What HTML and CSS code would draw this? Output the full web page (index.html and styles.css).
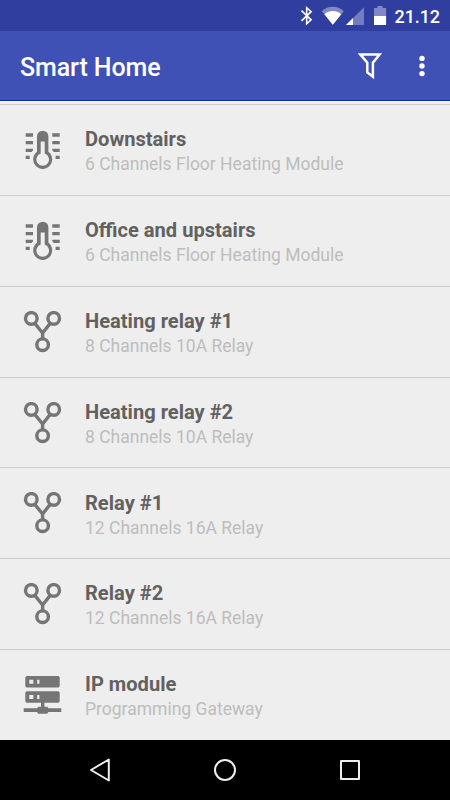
FILE: index.html
```
<!DOCTYPE html>
<html lang="en">
<head>
    <meta charset="UTF-8">
    <meta name="viewport" content="width=device-width, initial-scale=1.0">
    <title>Smart Home</title>
    <link rel="stylesheet" href="styles.css">
</head>
<body>

<!-- Shared icons -->
<svg class="symbols">
    <symbol id="heating" viewBox="0 0 42 42">
        <path fill="currentColor" d="M3.7 4.2H11v3.6H3.7zM3.7 12H11v3.2H3.7zM3.7 19.7H11v1.6L9.6 23H3.7zM3.7 26.8h4V30h-4zM30.3 4.2h7.4v3.6h-7.4zM30.3 12h7.4v3.2h-7.4zM30.3 19.7h7.4V23h-5.9l-1.5-1.7zM33.6 26.8h4.1V30h-4.1z"/>
        <path fill="currentColor" fill-rule="evenodd" d="M15 7.4a5.7 5.7 0 0 1 11.4 0v15.4a9.5 9.5 0 1 1-11.4 0zM18.7 12.6v12a6.3 6.3 0 1 0 4 0v-12z"/>
    </symbol>
    <symbol id="relay" viewBox="0 0 42 42">
        <g fill="none" stroke="currentColor" stroke-width="3.4">
            <circle cx="9.3" cy="7.4" r="5.8"/>
            <circle cx="31.7" cy="7.4" r="5.8"/>
            <circle cx="20.6" cy="33.7" r="5.8"/>
            <path d="M12.8 12.4l7.8 9.6v6M28.2 12.4L20.6 22"/>
        </g>
    </symbol>
    <symbol id="server" viewBox="0 0 42 42">
        <path fill="currentColor" fill-rule="evenodd" d="M4.5 2h32l1.2 1.2v9l-1.2 1.2h-32l-1.2-1.2v-9zM7.3 5.8v4h4v-4zM15.2 5.8v4h2.2v-4zM4.5 17.3h32l1.2 1.2v9l-1.2 1.2h-32l-1.2-1.2v-9zM7.3 21v4h4v-4zM15.2 21v4h2.2v-4z"/>
        <path fill="currentColor" d="M19 28h3.4v4.8h2.8l1.2 1.5h12.9V38H26.4l-1.2 1.7h-9L15 38H1.7v-3.7H15l1.2-1.5H19z"/>
    </symbol>
</svg>

<div class="status-bar">
    <svg class="status-icons" width="100" height="31" viewBox="0 0 100 31">
        <path fill="none" stroke="#fff" stroke-width="1.6" d="M1.5 10.6l9.6 9.2-4.4 4V7.7l4.4 4-9.6 9.1"/>
        <path fill="#8089c5" d="M21.8 11.2C28 5.4 37.6 5.4 43.8 11.2L32.8 24.7z"/>
        <path fill="#fff" d="M24.4 14.2c4.9-4.4 12-4.4 16.9 0L32.8 24.7z"/>
        <path fill="#737dbf" d="M64 7.2V25H46z"/>
        <path fill="#fff" d="M53 18v7h-7z"/>
        <path fill="#8089c5" d="M77.4 6h5.2v1.9h3.5V16H74V7.9h3.4z"/>
        <path fill="#fff" d="M74 16h12.1v9H74z"/>
    </svg>
    <span class="clock">21.12</span>
</div>

<header>
    <div class="title">Smart Home</div>
    <svg class="filter" width="24" height="28" viewBox="0 0 24 28">
        <path fill="none" stroke="#fff" stroke-width="2.5" d="M2.3 2.4h19.4l-6.8 8.2v14.2l-5.6-4.4v-9.8z"/>
    </svg>
    <svg class="more" width="6" height="22" viewBox="0 0 6 22">
        <g fill="#fff">
            <circle cx="3" cy="3.4" r="2.7"/>
            <circle cx="3" cy="11" r="2.7"/>
            <circle cx="3" cy="18.6" r="2.7"/>
        </g>
    </svg>
</header>

<div class="module-list">
    <div class="module">
        <svg class="icon"><use href="#heating"/></svg>
        <div>
            <h4>Downstairs</h4>
            <p>6 Channels Floor Heating Module</p>
        </div>
    </div>
    <div class="module">
        <svg class="icon"><use href="#heating"/></svg>
        <div>
            <h4>Office and upstairs</h4>
            <p>6 Channels Floor Heating Module</p>
        </div>
    </div>
    <div class="module">
        <svg class="icon"><use href="#relay"/></svg>
        <div>
            <h4>Heating relay #1</h4>
            <p>8 Channels 10A Relay</p>
        </div>
    </div>
    <div class="module">
        <svg class="icon"><use href="#relay"/></svg>
        <div>
            <h4>Heating relay #2</h4>
            <p>8 Channels 10A Relay</p>
        </div>
    </div>
    <div class="module">
        <svg class="icon"><use href="#relay"/></svg>
        <div>
            <h4>Relay #1</h4>
            <p>12 Channels 16A Relay</p>
        </div>
    </div>
    <div class="module">
        <svg class="icon"><use href="#relay"/></svg>
        <div>
            <h4>Relay #2</h4>
            <p>12 Channels 16A Relay</p>
        </div>
    </div>
    <div class="module">
        <svg class="icon"><use href="#server"/></svg>
        <div>
            <h4>IP module</h4>
            <p>Programming Gateway</p>
        </div>
    </div>
</div>

<nav>
    <svg width="24" height="26" viewBox="0 0 24 26">
        <path d="M3 13l17.8-10.5v21z"/>
    </svg>
    <svg width="24" height="26" viewBox="0 0 24 26">
        <circle cx="12" cy="13" r="10"/>
    </svg>
    <svg width="24" height="26" viewBox="0 0 24 26">
        <rect x="3" y="4" width="18" height="18"/>
    </svg>
</nav>

</body>
</html>
```

FILE: styles.css
```
* {
    box-sizing: border-box;
}

body {
    display: flex;
    flex-direction: column;
    height: 800px;
    margin: 0;
    overflow: hidden;
    font-family: Roboto, sans-serif;
    background-color: #eee;
}

.symbols {
    display: none;
}

.status-bar {
    display: flex;
    justify-content: flex-end;
    height: 31px;
    padding-right: 10px;
    background-color: #303f9f;
    color: white;
}

.status-icons {
    margin-right: -10px;
}

.clock {
    width: 50px;
    font-size: 18px;
    font-weight: 500;
    line-height: 33px;
    letter-spacing: -0.1px;
    text-align: right;
    white-space: nowrap;
}

header {
    display: flex;
    align-items: center;
    height: 70px;
    padding: 1px 25px 0 20px;
    background-color: #3f51b5;
    border-bottom: 1px solid #0531b0;
    color: white;
}

header .title {
    flex: 1;
    padding-top: 3px;
    font-size: 25px;
    font-weight: 500;
    letter-spacing: -0.1px;
}

header .filter {
    margin-right: 37px;
}

.module-list {
    flex: 1;
    display: flex;
    flex-direction: column;
    padding-top: 2px;
    border-top: 1px solid #fafafa;
}

.module {
    flex: 1;
    display: flex;
    align-items: center;
    padding-left: 22px;
    border-top: 1px solid #cecece;
}

.module .icon {
    width: 42px;
    height: 42px;
    margin-right: 21px;
    color: #757575;
}

.module h4 {
    margin: 0;
    padding-top: 3.4px;
    font-size: 20.1px;
    font-weight: 700;
    line-height: 25px;
    color: #616161;
}

.module p {
    margin: 0;
    font-size: 17.5px;
    line-height: 24px;
    color: #bdbdbd;
}

nav {
    display: flex;
    justify-content: center;
    align-items: center;
    gap: 101px;
    height: 60px;
    background-color: black;
}

nav svg {
    fill: none;
    stroke: #eee;
    stroke-width: 2;
    stroke-linejoin: round;
}
```
